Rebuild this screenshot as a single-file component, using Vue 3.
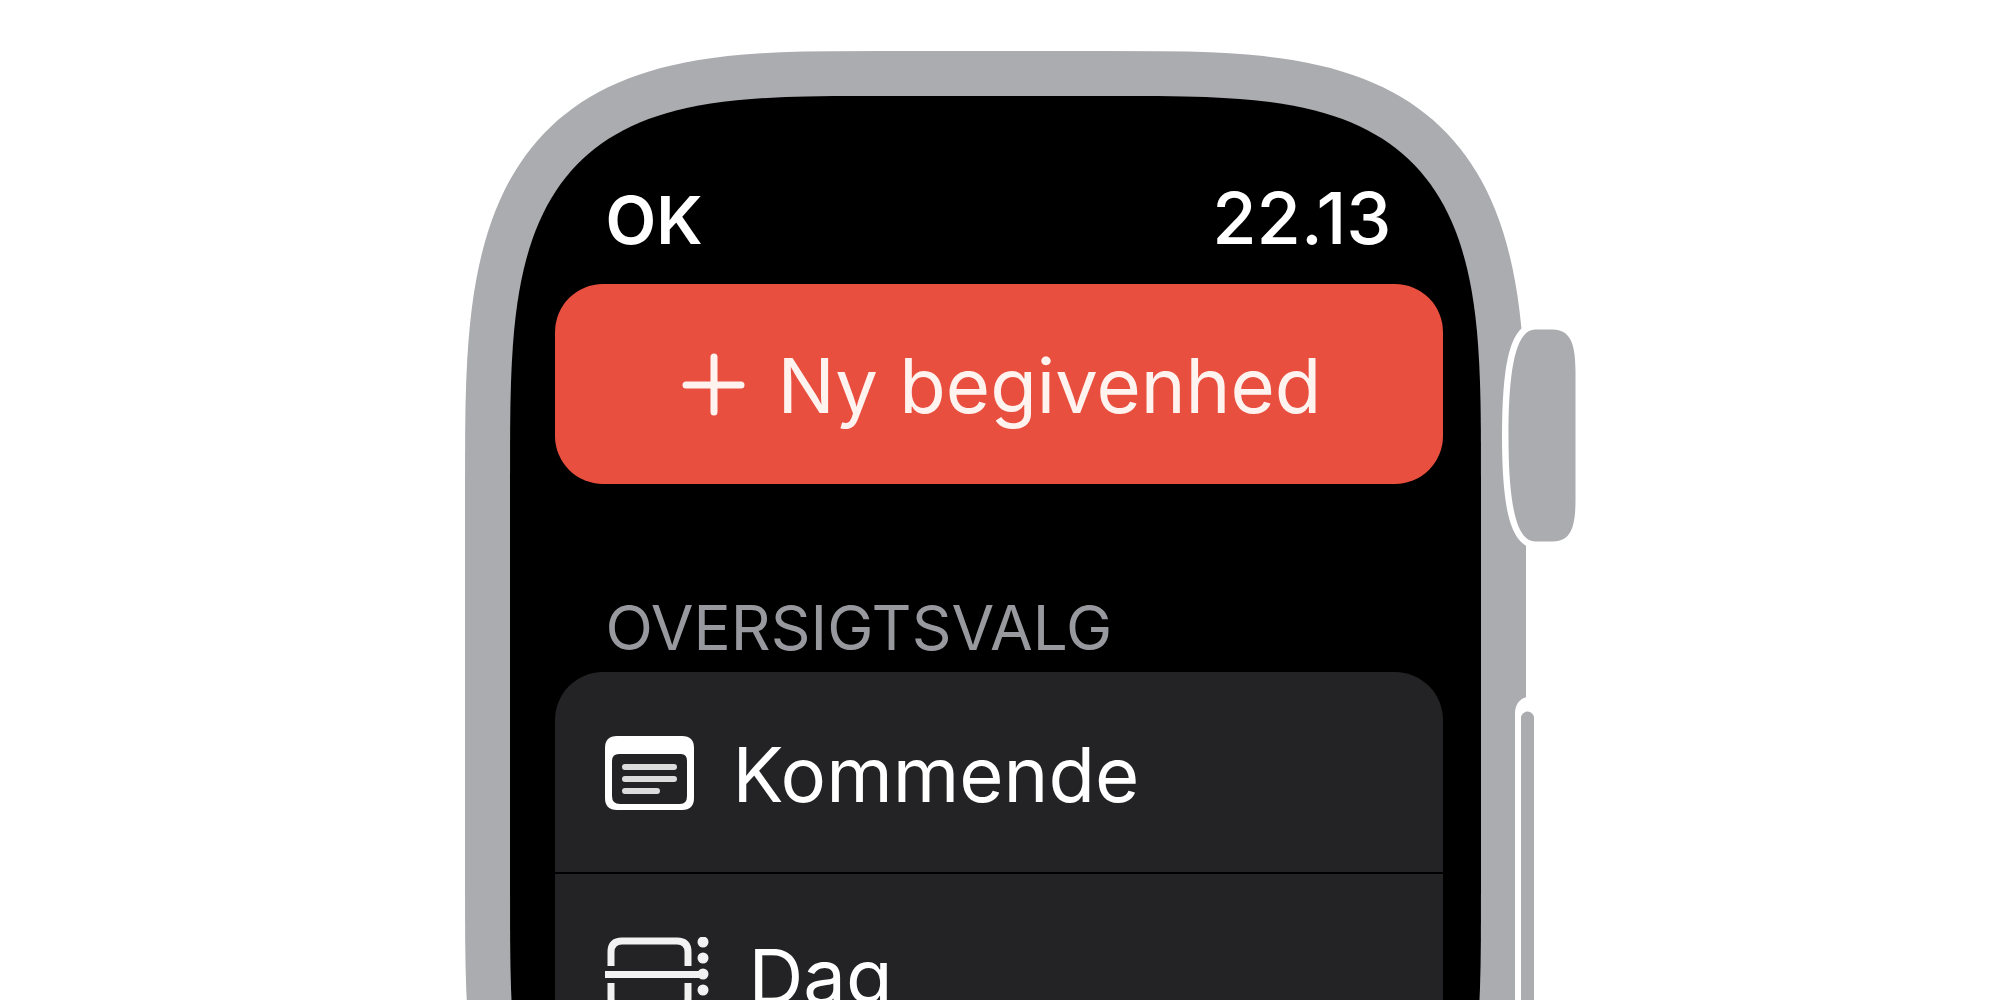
<script setup>
const time = '22.13'
const views = [
  { id: 'upcoming', label: 'Kommende' },
  { id: 'day', label: 'Dag' },
]
const dots = [5, 21, 37, 53, 69]

// Rectangle with superellipse corners, as an SVG path.
function squircle(x, y, width, height, rx, ry, power) {
  const steps = 48
  const corner = []
  for (let i = 0; i <= steps; i++) {
    const angle = (i / steps) * (Math.PI / 2)
    corner.push([
      rx * (1 - Math.cos(angle) ** (2 / power)),
      ry * (1 - Math.sin(angle) ** (2 / power)),
    ])
  }
  const reversed = [...corner].reverse()
  const points = [
    ...corner.map(([a, b]) => [x + a, y + b]),
    ...reversed.map(([a, b]) => [x + width - a, y + b]),
    ...corner.map(([a, b]) => [x + width - a, y + height - b]),
    ...reversed.map(([a, b]) => [x + a, y + height - b]),
  ]
  return 'M' + points.map((p) => p.map((n) => n.toFixed(2)).join(' ')).join('L') + 'Z'
}

const bezel = squircle(0, 0, 1061, 1268, 420, 439, 3.33)
const glass = squircle(45, 45, 971, 1178, 380, 394, 3.6)
</script>

<template>
  <main class="page">
    <div class="watch">
      <svg class="case" viewBox="0 0 1112 1268" preserveAspectRatio="none" aria-hidden="true">
        <path :d="bezel" fill="#abacb0" />
        <path :d="glass" fill="#000" />
        <path class="crown" d="M1066 278.500H1088C1104 279 1110.500 290 1110.500 320V449C1110.500 480 1104 490 1088 490.500H1070C1050 490 1043.500 448 1043.500 385C1043.500 321 1050 279 1070 278.500Z" />
        <rect x="1050" y="646" width="26" height="400" rx="13" ry="16" fill="#fff" />
        <rect x="1056" y="660.500" width="13" height="380" rx="6.500" fill="#abacb0" />
      </svg>

      <div class="screen">
        <header class="status">
          <button class="done" type="button">OK</button>
          <time class="clock">{{ time }}</time>
        </header>

        <button class="create" type="button">
          <svg class="plus" width="64" height="64" viewBox="0 0 64 64" aria-hidden="true">
            <path d="M4 33H59M32 5V60" fill="none" stroke="currentColor" stroke-width="7" stroke-linecap="round" />
          </svg>
          <span class="label">Ny begivenhed</span>
        </button>

        <section>
          <h2 class="heading">OVERSIGTSVALG</h2>
          <ul class="list">
            <li v-for="view in views" :key="view.id">
              <button class="row" type="button">
                <svg v-if="view.id === 'upcoming'" width="90" height="76" viewBox="0 0 90 76" aria-hidden="true">
                  <path fill="#fff" fill-rule="evenodd" d="M12 1H77Q89 1 89 13V63Q89 75 77 75H12Q0 75 0 63V13Q0 1 12 1ZM14 19Q7 19 7 26V61Q7 69 15 69H75Q82 69 82 61V26Q82 19 76 19Z" />
                  <path d="M20 32H69M20 44H69M20 56H52" fill="none" stroke="#dcdcdd" stroke-width="6" stroke-linecap="round" />
                </svg>
                <svg v-else width="106" height="76" viewBox="0 0 106 76" aria-hidden="true">
                  <g fill="none" stroke="#f2f2f3" stroke-width="7">
                    <path d="M6 29V15Q6 4 17 4H72Q83 4 83 15V29M6 46V61Q6 72 17 72H72Q83 72 83 61V46" />
                    <path d="M0 37.500H98" />
                  </g>
                  <circle v-for="y in dots" :key="y" cx="98" :cy="y" r="5.500" fill="#f2f2f3" />
                </svg>
                <span class="label">{{ view.label }}</span>
              </button>
            </li>
          </ul>
        </section>
      </div>
    </div>
  </main>
</template>

<style>
body {
  background: #fff;
}
</style>

<style scoped>
.page {
  box-sizing: border-box;
  height: 100vh;
  padding: 51px 0 0 41px;
  overflow: hidden;
  font-family: Inter, "Liberation Sans", sans-serif;
}

.watch {
  position: relative;
  box-sizing: border-box;
  width: 100%;
  max-width: 1112px;
  min-height: 1268px;
  margin: 0 auto;
  padding: 45px 96px 45px 45px;
}

.case {
  position: absolute;
  inset: 0;
  width: 100%;
  height: 100%;
}

.crown {
  fill: #abacb0;
  stroke: #fff;
  stroke-width: 13px;
  paint-order: stroke;
}

.screen {
  position: relative;
  padding: 80px 38px 0 45px;
}

button {
  margin: 0;
  border: 0;
  background: none;
  color: #fff;
  font-family: inherit;
}

.status {
  display: flex;
  align-items: baseline;
  justify-content: space-between;
  height: 108px;
  padding: 0 51px;
  color: #fff;
  line-height: 84px;
}

.done {
  padding: 0;
  font-size: 66px;
  font-weight: 600;
}

.clock {
  font-size: 72px;
  font-weight: 500;
}

.create {
  display: flex;
  align-items: center;
  justify-content: center;
  gap: 32px;
  width: 100%;
  height: 200px;
  padding: 0 0 0 6px;
  border-radius: 48px;
  background: #e94f3f;
  color: #fff3f0;
  font-size: 76px;
}

.label {
  padding-top: 2px;
  white-space: nowrap;
}

.heading {
  margin: 0;
  padding: 106px 51px 6px;
  color: #98989f;
  font-size: 62px;
  font-weight: 400;
  line-height: 76px;
}

.list {
  margin: 0;
  padding: 0;
  overflow: hidden;
  border-radius: 48px;
  list-style: none;
}

.row {
  display: flex;
  align-items: center;
  gap: 38px;
  width: 100%;
  height: 200px;
  margin-bottom: 2px;
  padding: 2px 50px 0;
  background: #232325;
  font-size: 76px;
  text-align: left;
}
</style>
